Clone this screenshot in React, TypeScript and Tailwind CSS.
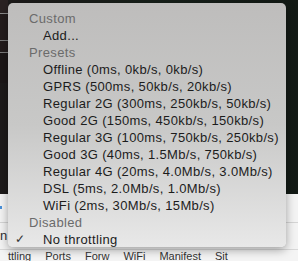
import React from 'react';

const presets = [
  'Offline (0ms, 0kb/s, 0kb/s)',
  'GPRS (500ms, 50kb/s, 20kb/s)',
  'Regular 2G (300ms, 250kb/s, 50kb/s)',
  'Good 2G (150ms, 450kb/s, 150kb/s)',
  'Regular 3G (100ms, 750kb/s, 250kb/s)',
  'Good 3G (40ms, 1.5Mb/s, 750kb/s)',
  'Regular 4G (20ms, 4.0Mb/s, 3.0Mb/s)',
  'DSL (5ms, 2.0Mb/s, 1.0Mb/s)',
  'WiFi (2ms, 30Mb/s, 15Mb/s)',
];

function Header({ label }: { label: string }) {
  return <div className="h-[17px] leading-[17px] pl-[21px] text-[#6b6b6b]">{label}</div>;
}

function Item({ label, checked }: { label: string; checked?: boolean }) {
  return (
    <div className="h-[17px] leading-[17px] flex items-center text-[#1c1c1c]">
      <span className="w-[35px] pl-[7px] text-[12px] text-[#333]">{checked ? '✓' : ''}</span>
      <span>{label}</span>
    </div>
  );
}

export default function App() {
  return (
    <div className="relative w-[298px] h-[261px] overflow-hidden bg-[#f4f4f4]" style={{ fontFamily: '"Liberation Sans", Arial, sans-serif' }}>
      {/* page behind the menu */}
      <div className="h-[194px] bg-gradient-to-r from-[#1d1a1a] via-[#17201a] to-[#131a15]">
        <div className="flex flex-col w-[8px]">
          <div className="h-[13px] bg-[#2a2222]" />
          <div className="h-[1px] bg-[#8a8a8a]" />
          <div className="h-[26px] bg-[#231c1c]" />
          <div className="h-[1px] bg-[#7a7a7a]" />
          <div className="h-[11px] bg-[#231c1c]" />
          <div className="h-[1px] bg-[#7a7a7a]" />
          <div className="h-[30px] bg-[#1c1717]" />
        </div>
      </div>
      <div className="h-[29px] border-b border-[#d4d4d4] bg-[#f3f3f3] pt-[12px]">
        <div className="w-[2px] h-[3px] bg-[#4a90d9]" />
      </div>
      <div className="h-[27px] bg-[#f3f3f3] border-b border-[#d8d8d8] text-[13px] leading-[26px] text-[#303030]">n</div>
      <div className="pl-[8px] pt-[1px] text-[11px] leading-[10px] text-[#333] whitespace-nowrap flex gap-[14px]">
        <span>ttling</span>
        <span>Ports</span>
        <span>Forw</span>
        <span>WiFi</span>
        <span>Manifest</span>
        <span>Sit</span>
      </div>

      {/* dropdown menu */}
      <div className="absolute left-[8px] top-[3px] w-[278px] h-[244px] rounded-[5px] bg-gradient-to-b from-[#bebdbc] via-[#c8c8c7] to-[#e8e8e8] shadow-[0_3px_10px_rgba(0,0,0,0.35)] pt-[7px] text-[13px] tracking-[0.35px]">
        <Header label="Custom" />
        <Item label="Add..." />
        <Header label="Presets" />
        {presets.map((p) => (
          <Item key={p} label={p} />
        ))}
        <Header label="Disabled" />
        <Item label="No throttling" checked />
      </div>
    </div>
  );
}
